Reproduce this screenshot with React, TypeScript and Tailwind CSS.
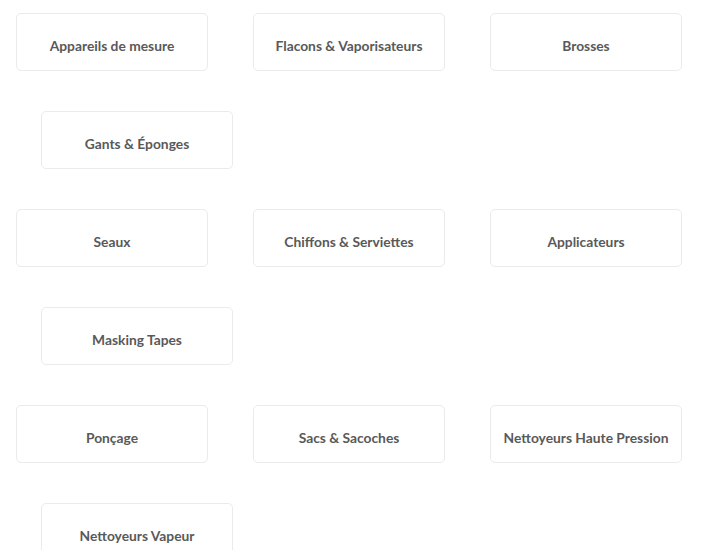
import React from "react";

const groups: { row: string[]; extra: string }[] = [
  { row: ["Appareils de mesure", "Flacons & Vaporisateurs", "Brosses"], extra: "Gants & Éponges" },
  { row: ["Seaux", "Chiffons & Serviettes", "Applicateurs"], extra: "Masking Tapes" },
  { row: ["Ponçage", "Sacs & Sacoches", "Nettoyeurs Haute Pression"], extra: "Nettoyeurs Vapeur" },
];

function Card({ label }: { label: string }) {
  return (
    <div className="w-[192px] h-[58px] shrink-0 flex items-center justify-center pt-[8px] rounded-[5px] border border-[#ebebeb] bg-white">
      <span className="text-[13.8px] font-bold text-[#595959] whitespace-nowrap" style={{ fontFamily: "Lato, 'Open Sans', sans-serif" }}>
        {label}
      </span>
    </div>
  );
}

export default function App() {
  return (
    <div className="w-[708px] h-[550px] overflow-hidden bg-white pl-[16px] pt-[13px] flex flex-col gap-[40px]">
      {groups.map((g, i) => (
        <React.Fragment key={i}>
          <div className="flex gap-[45px]">
            {g.row.map((l) => (
              <Card key={l} label={l} />
            ))}
          </div>
          <div className="flex pl-[25px]">
            <Card label={g.extra} />
          </div>
        </React.Fragment>
      ))}
    </div>
  );
}
